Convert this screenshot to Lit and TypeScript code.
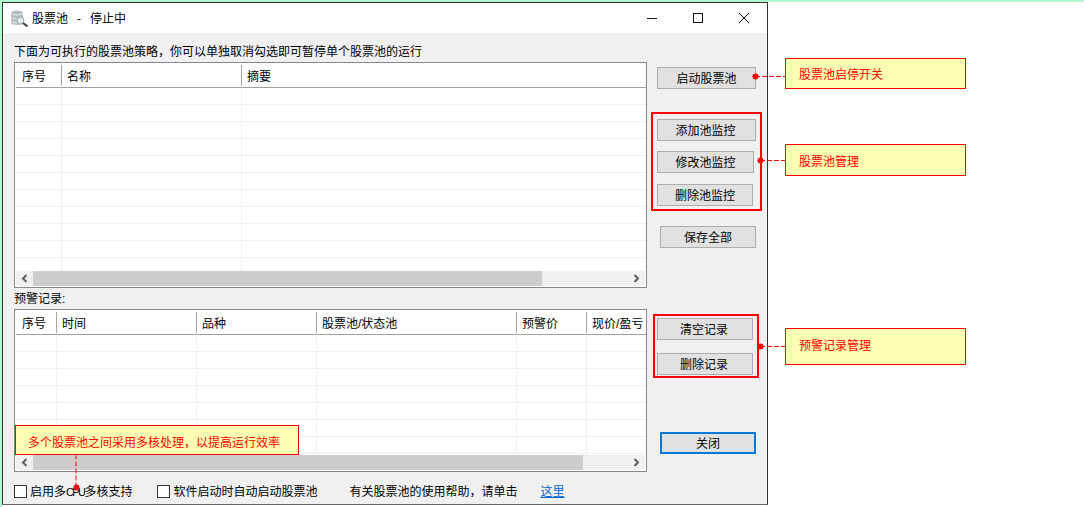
import { LitElement, html, css, svg } from "lit";
import { customElement, property } from "lit/decorators.js";

const FONT = css`"Liberation Sans", "Noto Sans CJK SC", sans-serif`;

@customElement("list-view")
export class ListView extends LitElement {
    @property({ type: Array }) columns: { title: string; width: number }[] = [];
    @property({ type: Number }) rows = 0;
    @property({ type: Number }) thumb = 0;

    static styles = css`
        :host {
            display: flex;
            flex-direction: column;
            box-sizing: border-box;
            width: 633px;
            border: 1px solid #828790;
            padding: 1px 0 1px 1px;
            background: #fff;
            font: 12px ${FONT};
            color: #000;
        }
        .head {
            display: flex;
            flex: none;
            height: 23px;
            border-bottom: 1px solid #a0a0a0;
            overflow: hidden;
        }
        .head .cell {
            display: flex;
            align-items: center;
            justify-content: flex-start;
            height: 21px;
            margin-top: 1px;
            padding-bottom: 1px;
            border-right: 1px solid #a5a5a5;
        }
        .cell {
            flex: none;
            box-sizing: border-box;
            padding-left: 5px;
            white-space: nowrap;
        }
        .cell:first-child {
            padding-left: 6px;
        }
        .cell:last-child {
            border-right: none !important;
        }
        .body {
            flex: 1;
            min-height: 0;
            overflow: hidden;
        }
        .row {
            display: flex;
            height: 17px;
            box-sizing: border-box;
            border-bottom: 1px solid #f0f0f0;
        }
        .row .cell {
            border-right: 1px solid #f0f0f0;
        }
        .bar {
            display: flex;
            flex: none;
            height: 15px;
            margin-right: 1px;
            background: #f0f0f0;
        }
        .arrow {
            flex: none;
            display: flex;
            align-items: center;
            justify-content: center;
            width: 17px;
        }
        .arrow svg {
            display: block;
        }
        .track {
            flex: 1;
        }
        .thumb {
            height: 100%;
            background: #cdcdcd;
        }
    `;

    render() {
        return html`
            <div class="head">
                ${this.columns.map(c => html`<div class="cell" style="width:${c.width}px">${c.title}</div>`)}
            </div>
            <div class="body">
                ${Array.from({ length: this.rows }, () => html`
                    <div class="row">
                        ${this.columns.map(c => html`<div class="cell" style="width:${c.width}px"></div>`)}
                    </div>
                `)}
            </div>
            <div class="bar">
                <div class="arrow">
                    <svg width="7" height="9" viewBox="0 0 7 9"><path d="M5.500 1 2 4.500 5.500 8" fill="none" stroke="#606060" stroke-width="2"/></svg>
                </div>
                <div class="track"><div class="thumb" style="width:${this.thumb}px"></div></div>
                <div class="arrow">
                    <svg width="7" height="9" viewBox="0 0 7 9"><path d="M1.500 1 5 4.500 1.500 8" fill="none" stroke="#606060" stroke-width="2"/></svg>
                </div>
            </div>
        `;
    }
}

const POOL_COLUMNS = [
    { title: "序号", width: 46 },
    { title: "名称", width: 180 },
    { title: "摘要", width: 404 },
];

const RECORD_COLUMNS = [
    { title: "序号", width: 41 },
    { title: "时间", width: 140 },
    { title: "品种", width: 120 },
    { title: "股票池/状态池", width: 200 },
    { title: "预警价", width: 70 },
    { title: "现价/盈亏", width: 59 },
];

// callouts sit on top of the dialog, their place is the content
const NOTES = [
    { text: "股票池启停开关", x: 785, y: 58, w: 181, h: 31, pad: 13, top: 0, bottom: 0 },
    { text: "股票池管理", x: 785, y: 144, w: 181, h: 32, pad: 13, top: 0, bottom: 0 },
    { text: "预警记录管理", x: 785, y: 328, w: 181, h: 37, pad: 13, top: 0, bottom: 5 },
    { text: "多个股票池之间采用多核处理，以提高运行效率", x: 15, y: 425, w: 284, h: 30, pad: 12, top: 2, bottom: 0 },
];

const FRAMES = [
    { x: 651, y: 112, w: 111, h: 99 },
    { x: 653, y: 314, w: 106, h: 64 },
];

const LINKS = [
    { x1: 755, y1: 76, x2: 785, y2: 76 },
    { x1: 760, y1: 160, x2: 785, y2: 160 },
    { x1: 760, y1: 346, x2: 785, y2: 346 },
    { x1: 76, y1: 487, x2: 76, y2: 455 },
];

@customElement("app-root")
export class AppRoot extends LitElement {
    static styles = css`
        * {
            box-sizing: border-box;
        }
        :host {
            display: block;
            position: relative;
            width: 1084px;
            height: 507px;
            padding: 2px;
            background: #fff;
            box-shadow: inset 0 0 0 2px #aef7d3;
            font: 12px ${FONT};
            color: #000;
            overflow: hidden;
        }
        .window {
            display: flex;
            flex-direction: column;
            width: 766px;
            height: 503px;
            border: 1px solid #333;
            border-bottom-color: #666;
            background: #f0f0f0;
        }
        .titlebar {
            display: flex;
            align-items: center;
            flex: none;
            height: 30px;
            padding-left: 8px;
            background: #fff;
        }
        .app-icon {
            display: block;
            margin-right: 4px;
        }
        .title {
            margin-bottom: 2px;
            white-space: nowrap;
        }
        .dash {
            margin: 0 9px;
        }
        .controls {
            display: flex;
            margin-left: auto;
        }
        .control {
            display: flex;
            align-items: center;
            justify-content: center;
            width: 46px;
            height: 30px;
        }
        .main {
            display: flex;
            flex: 1;
            min-height: 0;
        }
        .left {
            flex: none;
            width: 644px;
            padding: 12px 0 0 11px;
        }
        .caption {
            height: 14px;
            line-height: 14px;
            white-space: nowrap;
        }
        .intro {
            margin-bottom: 3px;
        }
        .pools {
            height: 226px;
        }
        .records-label {
            margin: 4px 0 3px;
        }
        .records {
            height: 163px;
        }
        .footer {
            display: flex;
            align-items: center;
            height: 14px;
            margin-top: 12px;
            white-space: nowrap;
        }
        .footer > span {
            margin-bottom: 1px;
        }
        .check {
            appearance: none;
            flex: none;
            width: 13px;
            height: 13px;
            margin: 0 3px 0 0;
            border: 1px solid #333;
            background: #fff;
        }
        .latin {
            font-size: 11px;
            letter-spacing: -1.600px;
        }
        .second {
            margin-left: 25px;
        }
        .help {
            margin-left: 32px;
        }
        .link {
            margin-left: 23px;
            color: #0066cc;
            text-decoration: underline;
        }
        .right {
            display: flex;
            flex-direction: column;
            align-items: flex-start;
            padding: 34px 0 0 10px;
        }
        button {
            flex: none;
            display: block;
            width: 96px;
            height: 22px;
            padding: 0 0 2px;
            border: 1px solid #adadad;
            border-radius: 0;
            background: #e1e1e1;
            font: 12px ${FONT};
            color: #000;
        }
        .wide {
            width: 99px;
        }
        .add {
            margin-top: 30px;
            padding-right: 2px;
        }
        .edit {
            width: 97px;
            margin-top: 10px;
        }
        .remove {
            margin-top: 11px;
        }
        .save {
            margin: 20px 0 0 3px;
        }
        .clear {
            margin-top: 70px;
            padding-right: 2px;
        }
        .drop {
            margin-top: 13px;
            padding-right: 2px;
        }
        .close {
            margin: 57px 0 0 3px;
            border: 2px solid #0078d7;
        }
        .note {
            position: absolute;
            display: flex;
            align-items: center;
            border: 1px solid #f00;
            background: #ffffb3;
            color: #f00;
            white-space: nowrap;
        }
        .frame {
            position: absolute;
            border: 2px solid #f00;
        }
        .links {
            position: absolute;
            left: 0;
            top: 0;
            pointer-events: none;
        }
    `;

    render() {
        return html`
            <div class="window">
                <div class="titlebar">
                    <svg class="app-icon" width="17" height="17" viewBox="0 0 17 17">
                        <path d="M0 3c0-3.500 12-3.500 12 0v10c0 2.500-12 2.500-12 0z" fill="#b4bec3"/>
                        <path d="M0 3c0 2.500 12 2.500 12 0M0 7c0 2.500 12 2.500 12 0M0 10.500c0 2.500 6 2.500 7 2.300" fill="none" stroke="#e6ebed" stroke-width="1"/>
                        <circle cx="9.500" cy="10.500" r="3.500" fill="#e4eaec" stroke="#99a3a7" stroke-width="1"/>
                        <path d="M12 13 16.500 16.500" stroke="#3c4346" stroke-width="2"/>
                    </svg>
                    <div class="title">股票池<span class="dash">-</span>停止中</div>
                    <div class="controls">
                        <div class="control">
                            <svg width="10" height="10" viewBox="0 0 10 10"><path d="M0 5.500h10" stroke="#111" stroke-width="1"/></svg>
                        </div>
                        <div class="control">
                            <svg width="10" height="10" viewBox="0 0 10 10"><rect x=".5" y=".5" width="9" height="9" fill="none" stroke="#111" stroke-width="1"/></svg>
                        </div>
                        <div class="control">
                            <svg width="10" height="10" viewBox="0 0 10 10"><path d="M0 0 10 10M10 0 0 10" stroke="#111" stroke-width="1"/></svg>
                        </div>
                    </div>
                </div>
                <div class="main">
                    <div class="left">
                        <div class="caption intro">下面为可执行的股票池策略，你可以单独取消勾选即可暂停单个股票池的运行</div>
                        <list-view class="pools" .columns=${POOL_COLUMNS} .rows=${11} .thumb=${509}></list-view>
                        <div class="caption records-label">预警记录:</div>
                        <list-view class="records" .columns=${RECORD_COLUMNS} .rows=${7} .thumb=${550}></list-view>
                        <div class="footer">
                            <input class="check" type="checkbox">
                            <span>启用多<span class="latin">CPU</span>多核支持</span>
                            <input class="check second" type="checkbox">
                            <span>软件启动时自动启动股票池</span>
                            <span class="help">有关股票池的使用帮助，请单击</span>
                            <span class="link">这里</span>
                        </div>
                    </div>
                    <div class="right">
                        <button class="wide">启动股票池</button>
                        <button class="wide add">添加池监控</button>
                        <button class="edit">修改池监控</button>
                        <button class="remove">删除池监控</button>
                        <button class="save">保存全部</button>
                        <button class="clear">清空记录</button>
                        <button class="drop">删除记录</button>
                        <button class="close">关闭</button>
                    </div>
                </div>
            </div>
            ${FRAMES.map(f => html`
                <div class="frame" style="left:${f.x}px;top:${f.y}px;width:${f.w}px;height:${f.h}px"></div>
            `)}
            ${NOTES.map(n => html`
                <div class="note" style="left:${n.x}px;top:${n.y}px;width:${n.w}px;height:${n.h}px;padding:${n.top}px 0 ${n.bottom}px ${n.pad}px">${n.text}</div>
            `)}
            <svg class="links" width="1084" height="507">
                ${LINKS.map(l => svg`
                    <line x1=${l.x1} y1=${l.y1 + 0.5} x2=${l.x2} y2=${l.y2 + 0.5} stroke="#f00" stroke-width="1" stroke-dasharray="5 2"/>
                    <circle cx=${l.x1 + 0.5} cy=${l.y1 + 0.5} r="3" fill="#f00"/>
                `)}
            </svg>
        `;
    }
}
